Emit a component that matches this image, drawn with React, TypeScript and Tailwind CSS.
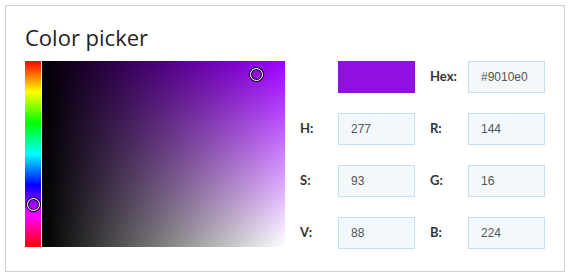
import { ReactNode } from 'react';

const fields: { label: string; value: string }[][] = [
  [
    { label: 'H:', value: '277' },
    { label: 'R:', value: '144' },
  ],
  [
    { label: 'S:', value: '93' },
    { label: 'G:', value: '16' },
  ],
  [
    { label: 'V:', value: '88' },
    { label: 'B:', value: '224' },
  ],
];

function Label({ children }: { children: ReactNode }) {
  return (
    <div className="w-[38px] h-[32px] flex items-center text-[13px] font-bold text-[#333] font-['Lato','Liberation_Sans',sans-serif]">
      {children}
    </div>
  );
}

function Field({ value }: { value: string }) {
  return (
    <div className="w-[77px] h-[32px] flex items-center px-[12px] border border-[#c5dff0] bg-[#f3f8fc] text-[12px] text-[#555] font-['Liberation_Sans',Arial,sans-serif]">
      {value}
    </div>
  );
}

function Marker({ className }: { className: string }) {
  return (
    <div
      className={
        'absolute w-[13px] h-[13px] -ml-[6.5px] -mt-[6.5px] rounded-full border border-white shadow-[0_0_0_1px_#000,inset_0_0_0_1px_#000] ' +
        className
      }
    />
  );
}

export default function App() {
  return (
    <div className="bg-white w-[572px] h-[278px] p-[5px]">
      <div className="w-[560px] h-[267px] border border-[#cfcfcf] pl-[19px] pt-[15px]">
        <h1 className="text-[22px] leading-[32px] text-[#1f1f1f] font-['Segoe_UI','Open_Sans',sans-serif]">
          Color picker
        </h1>

        <div className="mt-[8px] flex">
          {/* hue strip */}
          <div className="relative w-[16px] h-[186px] bg-[linear-gradient(to_bottom,#f00,#ff0,#0f0,#0ff,#00f,#f0f,#f00)]">
            <Marker className="left-[8px] top-[143px]" />
          </div>

          {/* saturation / value area */}
          <div className="relative ml-[1px] w-[243px] h-[186px] bg-[linear-gradient(to_right,#000,transparent),linear-gradient(to_bottom,transparent,#fff),linear-gradient(#9d00ff,#9d00ff)]">
            <Marker className="left-[214px] top-[13px]" />
          </div>

          {/* inputs */}
          <div className="ml-[15px] flex flex-col gap-[20px]">
            <div className="flex">
              <div className="w-[38px]" />
              <div className="w-[77px] h-[32px] bg-[#9010e0]" />
              <div className="ml-[15px] flex">
                <Label>Hex:</Label>
                <Field value="#9010e0" />
              </div>
            </div>
            {fields.map((row) => (
              <div key={row[0].label} className="flex">
                <Label>{row[0].label}</Label>
                <Field value={row[0].value} />
                <div className="ml-[15px] flex">
                  <Label>{row[1].label}</Label>
                  <Field value={row[1].value} />
                </div>
              </div>
            ))}
          </div>
        </div>
      </div>
    </div>
  );
}
